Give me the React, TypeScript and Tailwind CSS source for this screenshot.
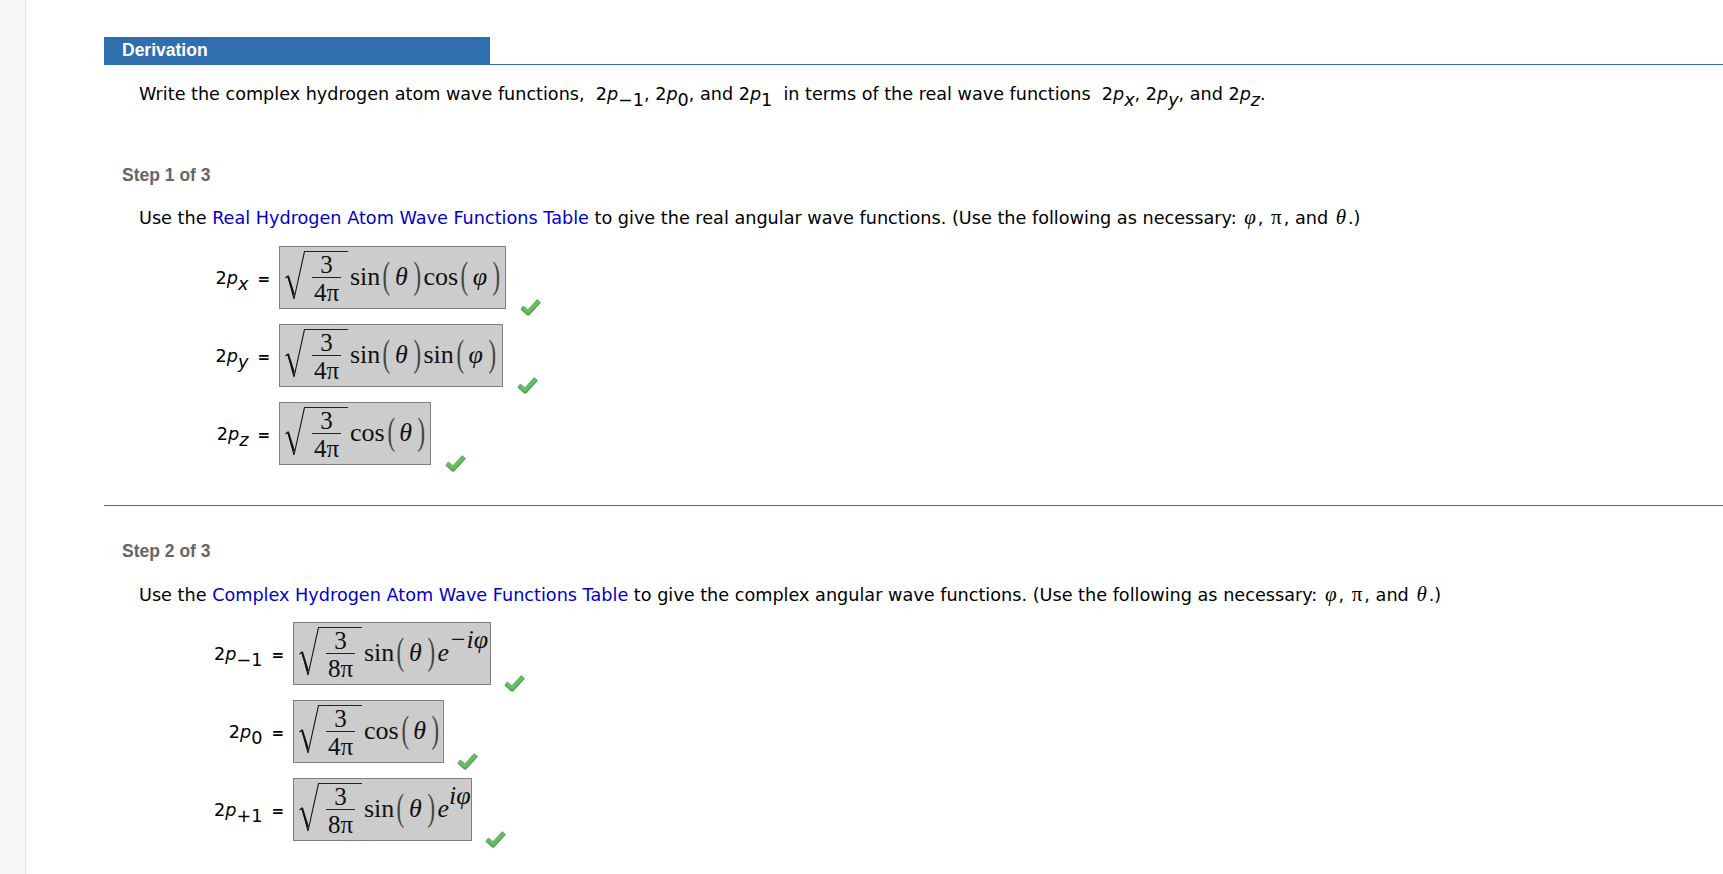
import React from "react";

const Check = ({ className }: { className: string }) => (
  <svg width="21" height="17" viewBox="0 0 21 17" className={className}>
    <path d="M2 8.5 L8 14 L19 2" fill="none" stroke="#4f9f4f" strokeWidth="5" strokeLinejoin="round" />
    <path d="M2 8 L8 13 L19 1.6" fill="none" stroke="#68bd68" strokeWidth="3.4" strokeLinejoin="round" />
  </svg>
);

const Root = ({ den }: { den: string }) => (
  <div className="flex items-start self-start mt-[4px]">
    <svg width="20" height="50" viewBox="0 0 20 50" className="shrink-0">
      <path d="M0.5 27 L3 25 L9 48 L19.5 0.5 L20 0.5" fill="none" stroke="#111" strokeWidth="1.1" />
      <path d="M3 25 L9 44" fill="none" stroke="#111" strokeWidth="2" />
    </svg>
    <div className="border-t border-[#222] px-[7px] flex flex-col items-center font-['Liberation_Serif',serif] text-[25px] leading-[27px] text-[#111] pt-[1px]">
      <span className="block w-[29px] text-center border-b border-[#222] h-[25px] leading-[24px]">3</span>
      <span className="block w-[29px] text-center h-[27px] leading-[29px]">{den}</span>
    </div>
  </div>
);

const Paren = ({ children }: { children: React.ReactNode }) => (
  <>
    <span className="text-[38px] leading-[30px] inline-block scale-x-[0.6] relative -top-[2px] text-[#444]">(</span>
    <i className="pl-[2px] pr-[3px]">{children}</i>
    <span className="text-[38px] leading-[30px] inline-block scale-x-[0.6] relative -top-[2px] text-[#444]">)</span>
  </>
);

const Expr = ({ den, width, children }: { den: string; width: string; children: React.ReactNode }) => (
  <div className={`flex items-start h-[63px] border border-[#808080] bg-[#cccccc] pl-[5px] ${width}`}>
    <Root den={den} />
    <div className="flex items-center h-full font-['Liberation_Serif',serif] text-[26px] leading-[30px] text-[#111] whitespace-nowrap pl-[2px] pb-[2px]">
      {children}
    </div>
  </div>
);

const Sub = ({ children }: { children: React.ReactNode }) => (
  <span className="relative top-[6px] italic">{children}</span>
);
const SubN = ({ children }: { children: React.ReactNode }) => (
  <span className="relative top-[6px]">{children}</span>
);

const Row = ({
  label,
  labelWidth,
  den,
  width,
  checkGap,
  children,
}: {
  label: React.ReactNode;
  labelWidth: string;
  den: string;
  width: string;
  checkGap: string;
  children: React.ReactNode;
}) => (
  <div className="flex items-start h-[63px] mb-[15px]">
    <div className={`flex items-center justify-end h-full pt-[1px] whitespace-nowrap text-black ${labelWidth}`}>
      {label}
      <span className="ml-[9px] mr-[9px] text-[15px] font-bold relative top-[1px]">=</span>
    </div>
    <Expr den={den} width={width}>{children}</Expr>
    <Check className={`mt-[53px] shrink-0 ${checkGap}`} />
  </div>
);

const Two = ({ children }: { children: React.ReactNode }) => (
  <span>
    2<i>p</i>
    {children}
  </span>
);

const Greek = ({ children, italic }: { children: string; italic?: boolean }) => (
  <span className={`font-['Liberation_Serif',serif] text-[21px] px-[2px] ${italic ? "italic" : ""}`}>{children}</span>
);

export default function App() {
  return (
    <div className="w-[1723px] h-[874px] overflow-hidden bg-white flex font-['DejaVu_Sans',sans-serif] text-[17.65px] text-black">
      <div className="w-[26px] shrink-0 bg-[#f7f7f7] border-r border-[#e4e4e4]" />
      <main className="flex-1 pl-[78px] pt-[37px]">
        <div className="border-b border-[#2f6fad] h-[28px]">
          <div className="w-[386px] h-[28px] bg-[#2f6fad] pl-[18px] font-['Liberation_Sans',sans-serif] font-bold text-[17.5px] leading-[18px] pt-[4px] text-white">
            Derivation
          </div>
        </div>

        <p className="pl-[35px] pt-[14px] h-[80px] leading-[30px] whitespace-nowrap text-[17.6px]">
          Write the complex hydrogen atom wave functions,&nbsp; <Two><SubN>−1</SubN></Two>, <Two><SubN>0</SubN></Two>, and <Two><SubN>1</SubN></Two>&nbsp; in terms of the real wave functions&nbsp; <Two><Sub>x</Sub></Two>, <Two><Sub>y</Sub></Two>, and <Two><Sub>z</Sub></Two>.
        </p>

        <h3 className="pl-[18px] pt-[18px] font-['Liberation_Sans',sans-serif] font-bold text-[17.5px] leading-[24px] text-[#666666]">
          Step 1 of 3
        </h3>
        <p className="pl-[35px] pt-[18px] leading-[24px] whitespace-nowrap">
          Use the <span className="text-[#0000cc]">Real Hydrogen Atom Wave Functions Table</span> to give the real angular wave functions. (Use the following as necessary: <Greek italic>φ</Greek>, <Greek>π</Greek>, and <Greek italic>θ</Greek>.)
        </p>

        <div className="pt-[16px]">
          <Row label={<Two><Sub>x</Sub></Two>} labelWidth="w-[175px]" den="4π" width="w-[227px]" checkGap="ml-[14px]">
            sin<Paren>θ</Paren>cos<Paren>φ</Paren>
          </Row>
          <Row label={<Two><Sub>y</Sub></Two>} labelWidth="w-[175px]" den="4π" width="w-[224px]" checkGap="ml-[14px]">
            sin<Paren>θ</Paren>sin<Paren>φ</Paren>
          </Row>
          <Row label={<Two><Sub>z</Sub></Two>} labelWidth="w-[175px]" den="4π" width="w-[152px]" checkGap="ml-[14px]">
            cos<Paren>θ</Paren>
          </Row>
        </div>

        <hr className="border-t border-[#666666] mt-[40px]" />

        <h3 className="pl-[18px] pt-[33px] font-['Liberation_Sans',sans-serif] font-bold text-[17.5px] leading-[24px] text-[#666666]">
          Step 2 of 3
        </h3>
        <p className="pl-[35px] pt-[19px] leading-[24px] whitespace-nowrap">
          Use the <span className="text-[#0000cc]">Complex Hydrogen Atom Wave Functions Table</span> to give the complex angular wave functions. (Use the following as necessary: <Greek italic>φ</Greek>, <Greek>π</Greek>, and <Greek italic>θ</Greek>.)
        </p>

        <div className="pt-[15px]">
          <Row label={<Two><SubN>−1</SubN></Two>} labelWidth="w-[189px]" den="8π" width="w-[198px]" checkGap="ml-[13px]">
            sin<Paren>θ</Paren><i>e</i><span className="text-[26px] italic relative -top-[13px]">−iφ</span>
          </Row>
          <Row label={<Two><SubN>0</SubN></Two>} labelWidth="w-[189px]" den="4π" width="w-[151px]" checkGap="ml-[13px]">
            cos<Paren>θ</Paren>
          </Row>
          <Row label={<Two><SubN>+1</SubN></Two>} labelWidth="w-[189px]" den="8π" width="w-[179px]" checkGap="ml-[13px]">
            sin<Paren>θ</Paren><i>e</i><span className="text-[26px] italic relative -top-[13px]">iφ</span>
          </Row>
        </div>
      </main>
    </div>
  );
}
